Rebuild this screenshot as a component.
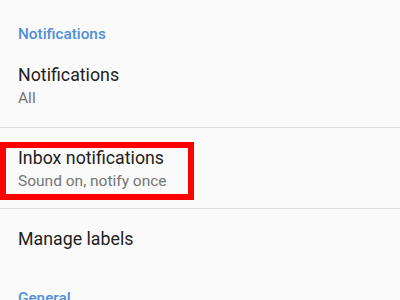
const font = { fontFamily: "Roboto, 'Noto Sans', sans-serif" };

function SectionHeader({ label, className }: { label: string; className: string }) {
  return (
    <div className={`px-[18px] ${className}`}>
      <p className="text-[15.3px] leading-[20px] font-medium text-[#4f8fd7]">{label}</p>
    </div>
  );
}

function Item({
  title,
  summary,
  highlighted,
}: {
  title: string;
  summary?: string;
  highlighted?: boolean;
}) {
  return (
    <div className="relative px-[18px] pt-[18px] pb-[16px]">
      <p className="text-[17.8px] leading-[24px] text-[#212121]">{title}</p>
      {summary && (
        <p className="text-[15.5px] leading-[22px] text-[#757575]">{summary}</p>
      )}
      {highlighted && (
        <div className="pointer-events-none absolute left-0 top-[14px] h-[58px] w-[194px] border-[6px] border-[#ff0000]" />
      )}
    </div>
  );
}

export default function App() {
  return (
    <div className="h-[300px] w-[400px] overflow-hidden bg-[#fafafa]" style={font}>
      <SectionHeader label="Notifications" className="pt-[24px] pb-[13px]" />
      <div className="px-[18px] pt-[6px] pb-[18px]">
        <p className="text-[17.8px] leading-[24px] text-[#212121]">Notifications</p>
        <p className="text-[15.5px] leading-[22px] text-[#757575]">All</p>
      </div>
      <div className="h-px bg-[#e0e0e0]" />
      <Item title="Inbox notifications" summary="Sound on, notify once" highlighted />
      <div className="h-px bg-[#e0e0e0]" />
      <div className="px-[18px] pt-[18px] pb-[18px]">
        <p className="text-[17.8px] leading-[24px] text-[#212121]">Manage labels</p>
      </div>
      <SectionHeader label="General" className="pt-[19px]" />
    </div>
  );
}
